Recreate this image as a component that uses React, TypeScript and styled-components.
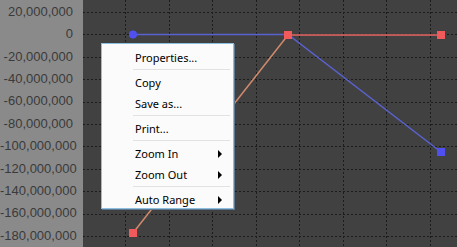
import React from 'react';
import styled, { createGlobalStyle } from 'styled-components';

const GlobalStyle = createGlobalStyle`
  html, body {
    margin: 0;
    padding: 0;
    background: #414141;
  }
`;

const yLabels = [
  '20,000,000',
  '0',
  '-20,000,000',
  '-40,000,000',
  '-60,000,000',
  '-80,000,000',
  '-100,000,000',
  '-120,000,000',
  '-140,000,000',
  '-160,000,000',
  '-180,000,000',
];

type MenuEntry = { label: string; submenu?: boolean } | 'sep';

const menuItems: MenuEntry[] = [
  { label: 'Properties...' },
  'sep',
  { label: 'Copy' },
  { label: 'Save as...' },
  'sep',
  { label: 'Print...' },
  'sep',
  { label: 'Zoom In', submenu: true },
  { label: 'Zoom Out', submenu: true },
  'sep',
  { label: 'Auto Range', submenu: true },
];

const ROW = 22.4;
const TOP = 12;

const App: React.FC = () => {
  const hLines = yLabels.map((_, i) => TOP + ROW * i);
  const vLines = Array.from({ length: 8 }, (_, k) => 42 + 43.5 * k);

  return (
    <>
      <GlobalStyle />
      <Chart>
        <Axis>
          {yLabels.map((l) => (
            <AxisLabel key={l}>{l}</AxisLabel>
          ))}
        </Axis>
        <Plot>
          <svg width="374" height="247" viewBox="0 0 374 247">
            {hLines.map((y) => (
              <line key={`h${y}`} x1="0" x2="374" y1={Math.round(y) + 0.5} y2={Math.round(y) + 0.5} stroke="#1c1c1c" strokeDasharray="2 2" />
            ))}
            {vLines.map((x) => (
              <line key={`v${x}`} x1={Math.round(x) + 0.5} x2={Math.round(x) + 0.5} y1="0" y2="247" stroke="#1c1c1c" strokeDasharray="2 2" />
            ))}
            {/* blue series */}
            <polyline points="50,34.5 205,34.5 358,152" fill="none" stroke="#5a62d0" strokeWidth="1.5" />
            {/* red series */}
            <line x1="50" y1="233" x2="205" y2="35" stroke="#d08a6c" strokeWidth="1.5" />
            <line x1="205" y1="35" x2="358" y2="35" stroke="#e86464" strokeWidth="1.5" />
            <circle cx="50" cy="34.5" r="4" fill="#5050f0" />
            <rect x="354" y="148" width="8" height="8" fill="#5050f0" />
            <rect x="201" y="31" width="8" height="8" fill="#f05a5a" />
            <rect x="354" y="31" width="8" height="8" fill="#f05a5a" />
            <rect x="46" y="229" width="8" height="8" fill="#f05a5a" />
          </svg>
        </Plot>
        <Menu>
          {menuItems.map((m, i) =>
            m === 'sep' ? (
              <Separator key={`s${i}`} />
            ) : (
              <MenuItem key={m.label}>
                <span>{m.label}</span>
                {m.submenu && <Arrow />}
              </MenuItem>
            )
          )}
        </Menu>
      </Chart>
    </>
  );
};

const Chart = styled.div`
  position: relative;
  display: flex;
  width: 457px;
  height: 247px;
  overflow: hidden;
`;

const Axis = styled.div`
  width: 83px;
  flex-shrink: 0;
  background: #8a8a8a;
  display: flex;
  flex-direction: column;
  padding-top: ${TOP - ROW / 2}px;
  box-sizing: border-box;
`;

const AxisLabel = styled.div`
  height: ${ROW}px;
  line-height: ${ROW}px;
  padding-right: 10px;
  text-align: right;
  font-family: 'Liberation Sans', Arial, sans-serif;
  font-size: 13px;
  color: #3a3a3a;
  white-space: nowrap;
`;

const Plot = styled.div`
  flex: 1;
  background: #414141;

  svg {
    display: block;
  }
`;

const Menu = styled.div`
  position: absolute;
  left: 101px;
  top: 43px;
  width: 133px;
  height: 166px;
  box-sizing: border-box;
  padding: 3px 3px 2px 2px;
  background: #fbfbfb;
  border: 1px solid #8fbfe0;
  box-shadow: 1px 1px 0 #5c7890;
  display: flex;
  flex-direction: column;
`;

const MenuItem = styled.div`
  height: 21px;
  flex-shrink: 0;
  display: flex;
  align-items: center;
  justify-content: space-between;
  padding: 0 8px 0 31px;
  font-family: 'Noto Sans', 'DejaVu Sans', sans-serif;
  font-size: 11px;
  color: #000;
  white-space: nowrap;
`;

const Arrow = styled.span`
  width: 0;
  height: 0;
  border-top: 4px solid transparent;
  border-bottom: 4px solid transparent;
  border-left: 4px solid #000;
`;

const Separator = styled.div`
  height: 1px;
  flex-shrink: 0;
  margin: 1px 0 2px 29px;
  background: #e2e2e2;
`;

export default App;
